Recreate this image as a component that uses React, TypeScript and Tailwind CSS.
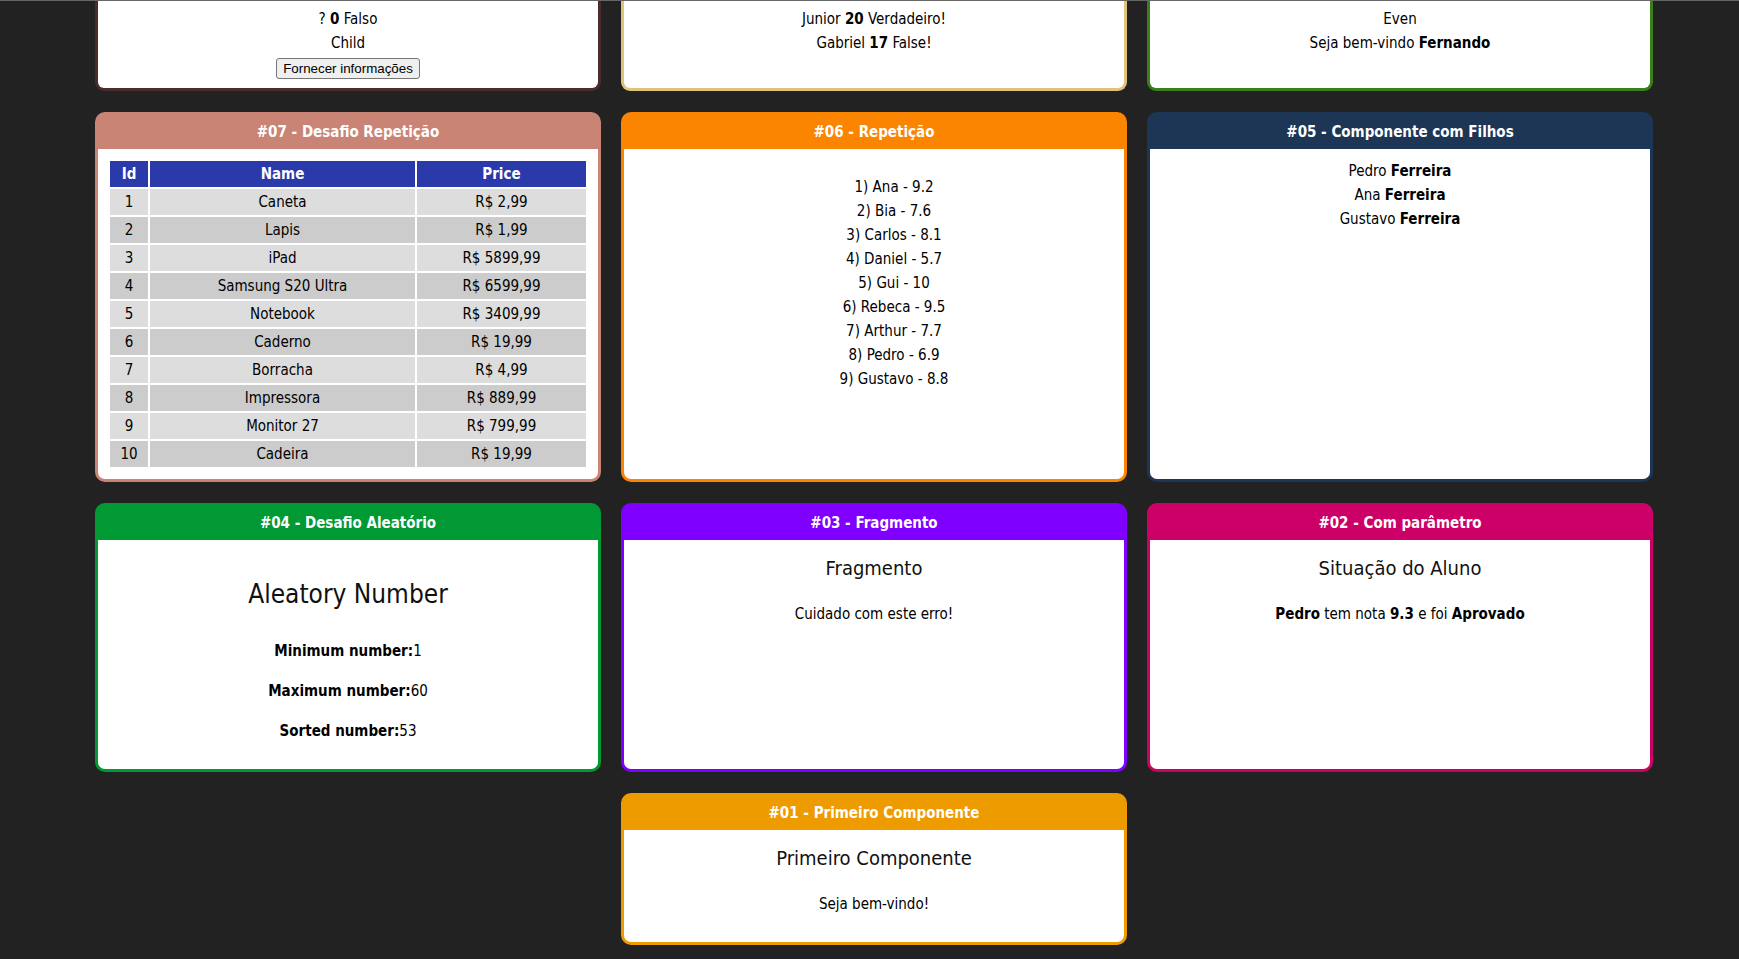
import React from "react";

type CardProps = {
  title: string;
  tone: string;
  children: React.ReactNode;
};

const Card: React.FC<CardProps> = ({ title, tone, children }) => {
  return (
    <div className={`w-[506px] flex flex-col rounded-[10px] border-[3px] ${tone}`}>
      <div className="h-[34px] flex items-center justify-center text-white font-bold text-[15px]">{title}</div>
      <div className="flex-1 bg-white rounded-b-[7px] p-[10px] text-center text-black">{children}</div>
    </div>
  );
};

const produtos = [
  { id: 1, name: "Caneta", price: "R$ 2,99" },
  { id: 2, name: "Lapis", price: "R$ 1,99" },
  { id: 3, name: "iPad", price: "R$ 5899,99" },
  { id: 4, name: "Samsung S20 Ultra", price: "R$ 6599,99" },
  { id: 5, name: "Notebook", price: "R$ 3409,99" },
  { id: 6, name: "Caderno", price: "R$ 19,99" },
  { id: 7, name: "Borracha", price: "R$ 4,99" },
  { id: 8, name: "Impressora", price: "R$ 889,99" },
  { id: 9, name: "Monitor 27", price: "R$ 799,99" },
  { id: 10, name: "Cadeira", price: "R$ 19,99" },
];

const alunos = [
  { nome: "Ana", nota: 9.2 },
  { nome: "Bia", nota: 7.6 },
  { nome: "Carlos", nota: 8.1 },
  { nome: "Daniel", nota: 5.7 },
  { nome: "Gui", nota: 10 },
  { nome: "Rebeca", nota: 9.5 },
  { nome: "Arthur", nota: 7.7 },
  { nome: "Pedro", nota: 6.9 },
  { nome: "Gustavo", nota: 8.8 },
];

const App: React.FC = () => {
  return (
    <div className="min-h-screen bg-[#222222] font-['Liberation_Sans_Narrow','DejaVu_Sans_Condensed',sans-serif] text-[15px] leading-6">
      <div className="h-px bg-[#666666]" />
      <div className="ml-[95px] w-[1558px] flex flex-col gap-y-[21px]">
        {/* parte de baixo dos cards que ficaram acima da rolagem */}
        <div className="flex gap-x-5">
          <div className="w-[506px] h-[90px] bg-white border-x-[3px] border-b-[3px] border-[#4a2c2c] rounded-b-[9px] pt-[6px] flex flex-col items-center">
            <div>? <b>0</b> Falso</div>
            <div>Child</div>
            <button className="mt-[3px] font-['Liberation_Sans',sans-serif] text-[13.33px] leading-[17px] px-[6px] py-px bg-[#efefef] border border-[#767676] rounded-[3px] text-black">
              Fornecer informações
            </button>
          </div>
          <div className="w-[506px] h-[90px] bg-white border-x-[3px] border-b-[3px] border-[#dfc47a] rounded-b-[9px] pt-[6px] flex flex-col items-center">
            <div>Junior <b>20</b> Verdadeiro!</div>
            <div>Gabriel <b>17</b> False!</div>
          </div>
          <div className="w-[506px] h-[90px] bg-white border-x-[3px] border-b-[3px] border-[#3b7f1a] rounded-b-[9px] pt-[6px] flex flex-col items-center">
            <div>Even</div>
            <div>Seja bem-vindo <b>Fernando</b></div>
          </div>
        </div>

        <div className="flex flex-wrap justify-center gap-x-5 gap-y-[21px]">
          <Card title="#07 - Desafio Repetição" tone="border-[#c98475] bg-[#c98475]">
            <table className="w-full border-separate border-spacing-[2px]">
              <thead>
                <tr className="bg-[#2a3aab] text-white">
                  <th className="w-[38px] py-px font-bold">Id</th>
                  <th className="w-[265px] py-px font-bold">Name</th>
                  <th className="py-px font-bold">Price</th>
                </tr>
              </thead>
              <tbody>
                {produtos.map((p, i) => (
                  <tr key={p.id} className={i % 2 === 0 ? "bg-[#dddddd]" : "bg-[#cccccc]"}>
                    <td className="py-px">{p.id}</td>
                    <td className="py-px">{p.name}</td>
                    <td className="py-px">{p.price}</td>
                  </tr>
                ))}
              </tbody>
            </table>
          </Card>

          <Card title="#06 - Repetição" tone="border-[#fb8500] bg-[#fb8500]">
            <ul className="my-4 pl-10 list-none">
              {alunos.map((a, i) => (
                <li key={a.nome}>
                  {i + 1}) {a.nome} - {a.nota}
                </li>
              ))}
            </ul>
          </Card>

          <Card title="#05 - Componente com Filhos" tone="border-[#1e3656] bg-[#1e3656]">
            <div>Pedro <b>Ferreira</b></div>
            <div>Ana <b>Ferreira</b></div>
            <div>Gustavo <b>Ferreira</b></div>
          </Card>

          <Card title="#04 - Desafio Aleatório" tone="border-[#009933] bg-[#009933]">
            <h1 className="my-[21px] text-[26px] leading-[47px] font-normal text-[#111]">Aleatory Number</h1>
            <p className="my-4"><b>Minimum number:</b>1</p>
            <p className="my-4"><b>Maximum number:</b>60</p>
            <p className="my-4"><b>Sorted number:</b>53</p>
          </Card>

          <Card title="#03 - Fragmento" tone="border-[#8000ff] bg-[#8000ff]">
            <h2 className="m-0 text-[20px] leading-[36px] font-normal text-[#111]">Fragmento</h2>
            <p className="my-4">Cuidado com este erro!</p>
          </Card>

          <Card title="#02 - Com parâmetro" tone="border-[#cc0066] bg-[#cc0066]">
            <h2 className="m-0 text-[20px] leading-[36px] font-normal text-[#111]">Situação do Aluno</h2>
            <p className="my-4">
              <b>Pedro</b> tem nota <b>9.3</b> e foi <b>Aprovado</b>
            </p>
          </Card>

          <Card title="#01 - Primeiro Componente" tone="border-[#ee9b00] bg-[#ee9b00]">
            <h2 className="m-0 text-[20px] leading-[36px] font-normal text-[#111]">Primeiro Componente</h2>
            <p className="my-4">Seja bem-vindo!</p>
          </Card>
        </div>
      </div>
    </div>
  );
};

export default App;
